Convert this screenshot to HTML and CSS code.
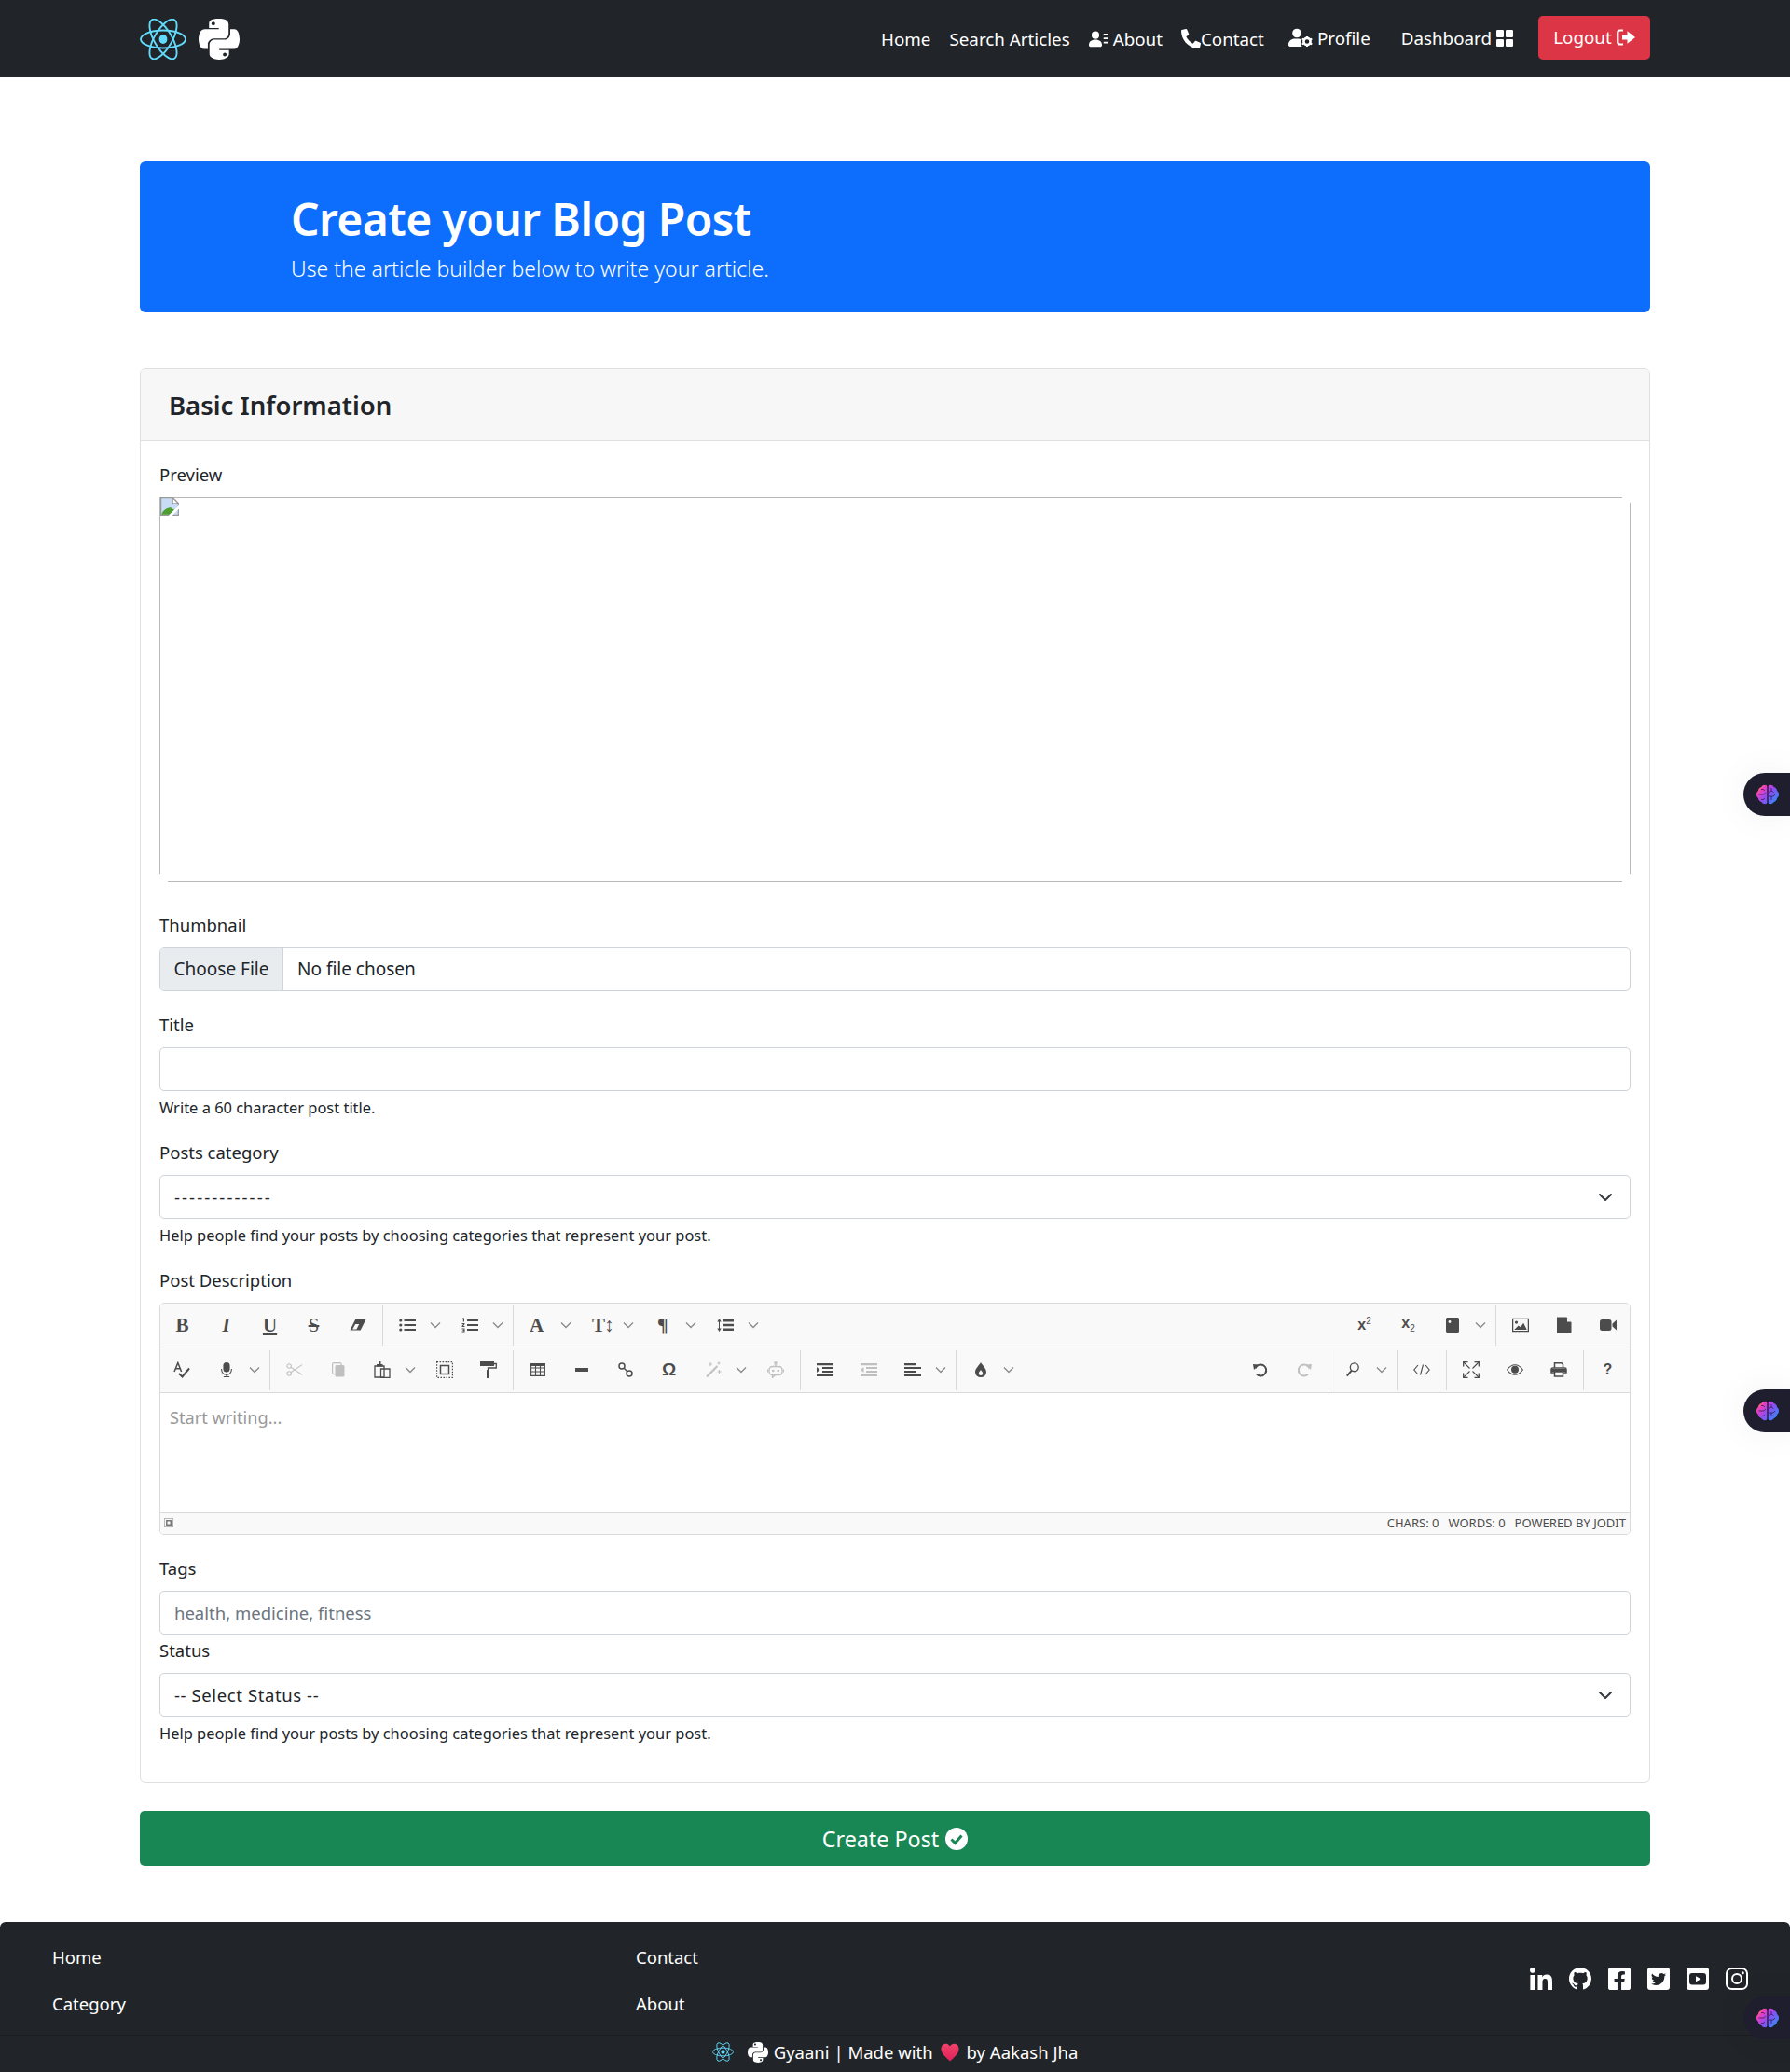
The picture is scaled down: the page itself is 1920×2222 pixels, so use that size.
FILE: index.html

```html
<!DOCTYPE html>
<html lang="en">

<head>
    <meta charset="UTF-8">
    <meta name="viewport" content="width=device-width, initial-scale=1.0">
    <title>Create Post - Gyaani</title>
    <link rel="stylesheet" href="styles.css">
</head>

<body>
    <svg class="sprite" xmlns="http://www.w3.org/2000/svg">
        <defs>
            <linearGradient id="brainGrad" gradientUnits="userSpaceOnUse" x1="2" y1="2" x2="22" y2="20">
                <stop offset="0" stop-color="#ff9a2e" />
                <stop offset="0.22" stop-color="#ee3cc0" />
                <stop offset="0.55" stop-color="#8f4df5" />
                <stop offset="1" stop-color="#2f8cf5" />
            </linearGradient>
            <linearGradient id="heartGrad" x1="0" y1="0" x2="0" y2="1">
                <stop offset="0" stop-color="#f0436a" />
                <stop offset="1" stop-color="#e0205a" />
            </linearGradient>
        </defs>
        <symbol id="react" viewBox="0 0 50 44">
            <g fill="none" stroke="#61dafb" stroke-width="1.9">
                <ellipse cx="25" cy="22" rx="24" ry="9.5" />
                <ellipse cx="25" cy="22" rx="24" ry="9.5" transform="rotate(60 25 22)" />
                <ellipse cx="25" cy="22" rx="24" ry="9.5" transform="rotate(120 25 22)" />
            </g>
            <ellipse cx="25" cy="22" rx="4.4" ry="5" fill="#61dafb" />
        </symbol>
        <symbol id="python" viewBox="0 32 448 448">
            <path fill="#fff" d="M439.8 200.5c-7.7-30.9-22.3-54.2-53.4-54.2h-40.1v47.4c0 36.8-31.2 67.8-66.8 67.8H172.7c-29.2 0-53.4 25-53.4 54.3v101.8c0 29 25.2 46 53.4 54.3 33.8 9.9 66.3 11.7 106.8 0 26.9-7.8 53.4-23.5 53.4-54.3v-40.7H226.2v-13.6h160.2c31.1 0 42.6-21.7 53.4-54.2 11.2-33.5 10.7-65.7 0-108.6zM286.2 404c11.1 0 20.1 9.1 20.1 20.3 0 11.3-9 20.5-20.1 20.5-11 0-20.1-9.3-20.1-20.5.1-11.3 9.1-20.3 20.1-20.3zM167.8 248.1h106.8c29.7 0 53.4-24.5 53.4-54.3V91.9c0-29-24.4-50.7-53.4-55.6-35.8-5.9-74.7-5.6-106.8.1-45.2 8-53.4 24.7-53.4 55.6v40.7h106.9v13.6h-147c-31.1 0-58.3 18.7-66.8 54.2-9.8 40.7-10.2 66.1 0 108.6 7.6 31.6 25.7 54.2 56.8 54.2H101v-48.8c0-35.3 30.5-66.4 66.8-66.4zm-6.7-142.6c-11.1 0-20.1-9.1-20.1-20.3.1-11.3 9-20.5 20.1-20.5 11 0 20.1 9.3 20.1 20.5s-9 20.3-20.1 20.3z" />
        </symbol>
        <symbol id="user-list" viewBox="0 0 24 20">
            <circle cx="8" cy="5" r="4.6" fill="#fff" />
            <path fill="#fff" d="M0 17c0-4 3-6.500 8-6.500s8 2.500 8 6.500c0 1.500-1 2.500-2.500 2.500h-11C1 19.500 0 18.500 0 17z" />
            <path fill="#fff" d="M18 3h6v2h-6zM18 8h6v2h-6zM18 13h6v2h-6z" />
        </symbol>
        <symbol id="phone" viewBox="0 0 512 512">
            <path fill="#fff" transform="matrix(-1 0 0 1 512 0)" d="M493.4 24.600l-104-24c-11.300-2.600-22.900 3.300-27.500 13.900l-48 112c-4.200 9.800-1.400 21.300 6.900 28l60.600 49.600c-36 76.700-98.900 140.500-177.200 177.200l-49.600-60.600c-6.800-8.300-18.200-11.100-28-6.900l-112 48C3.900 366.500-2 378.100.6 389.400l24 104C27.100 504.200 36.700 512 48 512c256.100 0 464-207.500 464-464 0-11.200-7.700-20.900-18.600-23.400z" />
        </symbol>
        <symbol id="user-cog" viewBox="0 0 26 20">
            <circle cx="9" cy="5" r="4.8" fill="#fff" />
            <path fill="#fff" d="M0 17.500c0-4 3-6.500 7-6.500h4c1 0 1.800.2 2.500.5-.5 2.500-.3 5.500 1 8H2c-1.200 0-2-.8-2-2z" />
            <circle cx="20" cy="14" r="3.600" fill="none" stroke="#fff" stroke-width="2.600" />
            <path stroke="#fff" stroke-width="2" d="M20 8.500v2.200M20 17.300v2.200M14.700 11l2 1.200M23.300 15.800l2 1.200M14.700 17l2-1.200M23.300 12.200l2-1.200" />
        </symbol>
        <symbol id="grid" viewBox="0 0 18 18">
            <rect width="8" height="8" rx="1.200" fill="#fff" />
            <rect x="10" width="8" height="8" rx="1.200" fill="#fff" />
            <rect y="10" width="8" height="8" rx="1.200" fill="#fff" />
            <rect x="10" y="10" width="8" height="8" rx="1.200" fill="#fff" />
        </symbol>
        <symbol id="signout" viewBox="0 0 20 18">
            <path fill="none" stroke="#fff" stroke-width="2.200" d="M7 1.500H3.500A2.200 2.200 0 0 0 1.300 3.700v10.600a2.200 2.200 0 0 0 2.200 2.200H7" />
            <path fill="#fff" d="M11.500 2.300 20 9l-8.500 6.700V11.500H6v-5h5.500z" />
        </symbol>
        <symbol id="check-circle" viewBox="0 0 24 24">
            <circle cx="12" cy="12" r="12" fill="#fff" />
            <path fill="none" stroke="#198754" stroke-width="3" d="M6.500 12.500 10.500 16.500 17.500 8.500" />
        </symbol>
        <symbol id="heart" viewBox="0 0 20 20">
            <path fill="url(#heartGrad)" d="M10 19.500C5 15 .5 11 .5 6.300.5 3 2.800.8 5.500.8 7.400.8 9 1.800 10 3.600 11 1.800 12.600.8 14.500.8c2.700 0 5 2.200 5 5.500C19.500 11 15 15 10 19.500z" />
        </symbol>
        <symbol id="linkedin" viewBox="0 0 448 448">
            <path fill="#fff" d="M100.280 448H7.400V148.900h92.880zM53.790 108.100C24.090 108.100 0 83.500 0 53.800a53.790 53.790 0 0 1 107.580 0c0 29.700-24.100 54.300-53.790 54.300zM447.900 448h-92.680V302.400c0-34.700-.7-79.200-48.290-79.200-48.290 0-55.690 37.700-55.690 76.700V448h-92.780V148.900h89.080v40.800h1.300c12.400-23.500 42.690-48.300 87.880-48.300 94 0 111.280 61.900 111.280 142.300V448z" />
        </symbol>
        <symbol id="github" viewBox="0 0 16 16">
            <path fill="#fff" d="M8 0C3.580 0 0 3.580 0 8c0 3.540 2.290 6.530 5.470 7.590.4.070.55-.17.55-.38 0-.19-.01-.82-.01-1.490-2.010.37-2.530-.49-2.690-.94-.09-.23-.48-.94-.82-1.130-.28-.15-.68-.52-.01-.53.63-.01 1.080.58 1.230.82.720 1.210 1.870.87 2.330.66.070-.52.280-.87.510-1.070-1.780-.2-3.640-.89-3.640-3.950 0-.87.310-1.590.820-2.150-.08-.2-.36-1.020.080-2.120 0 0 .67-.21 2.200.82.640-.18 1.320-.27 2-.27.680 0 1.360.09 2 .27 1.530-1.040 2.200-.82 2.200-.82.440 1.100.160 1.920.080 2.120.510.56.820 1.270.820 2.150 0 3.070-1.870 3.750-3.650 3.950.29.250.54.730.54 1.480 0 1.070-.01 1.930-.01 2.200 0 .21.150.46.550.38A8.012 8.012 0 0 0 16 8c0-4.420-3.580-8-8-8z" />
        </symbol>
        <symbol id="facebook" viewBox="0 32 448 448">
            <path fill="#fff" d="M400 32H48A48 48 0 0 0 0 80v352a48 48 0 0 0 48 48h137.250V327.690h-63V256h63v-54.640c0-62.150 37-96.480 93.670-96.480 27.140 0 55.520 4.840 55.520 4.840v61h-31.270c-30.810 0-40.420 19.120-40.420 38.730V256h68.780l-11 71.690h-57.780V480H400a48 48 0 0 0 48-48V80a48 48 0 0 0-48-48z" />
        </symbol>
        <symbol id="twitter" viewBox="0 0 24 24">
            <rect width="24" height="24" rx="3" fill="#fff" />
            <path fill="#212529" transform="translate(4 4)" d="M5.026 15c6.038 0 9.341-5.003 9.341-9.334 0-.14 0-.282-.006-.422A6.685 6.685 0 0 0 16 3.542a6.658 6.658 0 0 1-1.889.518 3.301 3.301 0 0 0 1.447-1.817 6.533 6.533 0 0 1-2.087.793A3.286 3.286 0 0 0 7.875 6.030a9.325 9.325 0 0 1-6.767-3.429 3.289 3.289 0 0 0 1.018 4.382A3.323 3.323 0 0 1 .64 6.575v.045a3.288 3.288 0 0 0 2.632 3.218 3.203 3.203 0 0 1-.865.115 3.230 3.230 0 0 1-.614-.057 3.283 3.283 0 0 0 3.067 2.277A6.588 6.588 0 0 1 .78 13.580a6.320 6.320 0 0 1-.78-.045A9.344 9.344 0 0 0 5.026 15z" />
        </symbol>
        <symbol id="youtube" viewBox="0 0 24 24">
            <rect width="24" height="24" rx="3" fill="#fff" />
            <rect x="3" y="6" width="18" height="12.500" rx="3" fill="#212529" />
            <path fill="#fff" d="M10 9.300 15.500 12.200 10 15.200z" />
        </symbol>
        <symbol id="instagram" viewBox="0 0 24 24">
            <rect x="1" y="1" width="22" height="22" rx="5.500" fill="none" stroke="#fff" stroke-width="2" />
            <circle cx="12" cy="12" r="5" fill="none" stroke="#fff" stroke-width="2" />
            <circle cx="18.300" cy="5.700" r="1.500" fill="#fff" />
        </symbol>
        <symbol id="brain" viewBox="0 0 24 24">
            <path fill="url(#brainGrad)" d="M11.300 3.500v17c0 1-1 1.700-2.300 1.700-1.700 0-3-.8-3.600-2.200C3.500 19.500 2 18 2 16c-1.300-1-2-2.400-2-4s.7-3 2-4c0-2 1.500-3.600 3.400-4C6 2.700 7.300 1.800 9 1.800c1.300 0 2.300.7 2.300 1.700z" />
            <path fill="url(#brainGrad)" d="M12.700 3.500v17c0 1 1 1.700 2.300 1.700 1.700 0 3-.8 3.600-2.200 1.900-.5 3.400-2 3.400-4 1.300-1 2-2.400 2-4s-.7-3-2-4c0-2-1.500-3.600-3.400-4C18 2.700 16.700 1.800 15 1.800c-1.300 0-2.300.7-2.300 1.700z" />
            <path fill="none" stroke="#1e1e2e" stroke-width=".7" d="M2.500 12h5M7.500 12c1 0 2-1 2-2M5 6.500h2c1 0 1.500 1 1.500 1.500M5 17.500h2c1 0 1.500-1 1.500-1.500M16 5v3l-2 1.500M16 8l2.500 1.500M14 14h4l2-2M16 14v4" />
        </symbol>

        <!-- editor toolbar -->
        <symbol id="i-chev" viewBox="0 0 14 14">
            <path fill="none" stroke="#8a8a8a" stroke-width="1.300" d="M2 4.500 7 9.500 12 4.500" />
        </symbol>
        <symbol id="i-eraser" viewBox="0 0 20 16">
            <path fill="#4c4c4c" d="M7 1h12.500L13 14H.5z" />
            <path fill="#f9f9f9" d="M3.500 13 6.800 7h4.500l-3 6z" />
        </symbol>
        <symbol id="i-ul" viewBox="0 0 18 14">
            <circle cx="1.800" cy="2" r="1.600" fill="#4c4c4c" />
            <circle cx="1.800" cy="7" r="1.600" fill="#4c4c4c" />
            <circle cx="1.800" cy="12" r="1.600" fill="#4c4c4c" />
            <path fill="#4c4c4c" d="M5.500 1h12.500v2H5.500zM5.500 6h12.500v2H5.500zM5.500 11h12.500v2H5.500z" />
        </symbol>
        <symbol id="i-ol" viewBox="0 0 18 16">
            <path fill="#4c4c4c" d="M1 .5h2v4H1.800V1.500H1zM.5 6h3v1L2 9h1.500v1h-3V9L2 7H.5zM.5 11.500h3v4h-3v-1h2v-.6h-1v-.8h1v-.6h-2z" />
            <path fill="#4c4c4c" d="M6 2h12v2H6zM6 7h12v2H6zM6 12h12v2H6z" />
        </symbol>
        <symbol id="i-lh" viewBox="0 0 18 14">
            <path fill="#4c4c4c" d="M2 3.500H.3L2.500 0l2.200 3.500H3v7h1.700L2.500 14 .3 10.500H2z" />
            <path fill="#4c4c4c" d="M6 1h12v2.500H6zM6 5.800h12v2.500H6zM6 10.500h12V13H6z" />
        </symbol>
        <symbol id="i-book" viewBox="0 0 14 16">
            <path fill="#4c4c4c" d="M1.500 0h11A1.500 1.500 0 0 1 14 1.500v13a1.500 1.500 0 0 1-1.500 1.500h-11A1.500 1.500 0 0 1 0 14.500v-13A1.500 1.500 0 0 1 1.500 0z" />
            <circle cx="4" cy="4.500" r="1.400" fill="#f9f9f9" />
        </symbol>
        <symbol id="i-image" viewBox="0 0 20 16">
            <path fill="none" stroke="#4c4c4c" stroke-width="1.400" d="M.7.7h18.600v14.600H.7z" />
            <circle cx="5" cy="4.800" r="1.800" fill="#4c4c4c" />
            <path fill="#4c4c4c" d="M2.500 13.500 7.500 8.500l2.500 2 3.500-5 4 8z" />
        </symbol>
        <symbol id="i-file" viewBox="0 0 16 18">
            <path fill="#4c4c4c" d="M0 .5h10.500l5 5.500v12H0z" />
            <path fill="#f9f9f9" d="M11 .5 15.500 5.500H11z" />
        </symbol>
        <symbol id="i-video" viewBox="0 0 18 14">
            <rect y="1" width="12.500" height="12" rx="2.500" fill="#4c4c4c" />
            <path fill="#4c4c4c" d="M13.500 5.500 18 1.500v11l-4.500-4z" />
        </symbol>
        <symbol id="i-spell" viewBox="0 0 18 18">
            <path fill="none" stroke="#4c4c4c" stroke-width="1.500" d="M1 11 4.800 1.500 8.600 11M2.400 7.800h4.800" />
            <path fill="none" stroke="#4c4c4c" stroke-width="2" d="M6 13 9.500 16.500 17 7.500" />
        </symbol>
        <symbol id="i-mic" viewBox="0 0 14 18">
            <rect x="3" y="0" width="8" height="12" rx="4" fill="#4c4c4c" />
            <path fill="none" stroke="#4c4c4c" stroke-width="1.200" d="M1 8v1a6 6 0 0 0 12 0V8M7 15v2.500M3.500 17.400h7" />
        </symbol>
        <symbol id="i-cut" viewBox="0 0 20 16">
            <g fill="none" stroke="#c0c0c0" stroke-width="1.200">
                <circle cx="3.500" cy="3.500" r="2.500" />
                <circle cx="3.500" cy="12.500" r="2.500" />
                <path d="M5.500 5 19 14M5.500 11 19 2" />
            </g>
        </symbol>
        <symbol id="i-copy" viewBox="0 0 14 16">
            <rect x=".6" y=".6" width="9.500" height="12" rx="1.500" fill="none" stroke="#c0c0c0" stroke-width="1.200" />
            <rect x="3.500" y="3" width="10" height="12.500" rx="1.500" fill="#c0c0c0" />
        </symbol>
        <symbol id="i-paste" viewBox="0 0 18 18">
            <path fill="none" stroke="#4c4c4c" stroke-width="1.300" d="M1 5h10v12H1zM7.500 8h9.500v9.300H7.500z" />
            <path fill="#4c4c4c" d="M3 3h2V0h2.500v3h2v2.500H3z" />
        </symbol>
        <symbol id="i-select" viewBox="0 0 18 18">
            <path fill="none" stroke="#4c4c4c" stroke-width="1.200" stroke-dasharray="1.500 1.500" d="M.6.6h16.800v16.800H.6z" />
            <path fill="none" stroke="#4c4c4c" stroke-width="1.500" d="M4.500 4.500h9v9h-9z" />
        </symbol>
        <symbol id="i-paint" viewBox="0 0 18 18">
            <path fill="#4c4c4c" d="M0 0h15v5H0zM7 9h3v9H7z" />
            <path fill="none" stroke="#4c4c4c" stroke-width="1.300" d="M15 2.500h2.300v4.500H8.500v3" />
        </symbol>
        <symbol id="i-table" viewBox="0 0 16 14">
            <path fill="none" stroke="#4c4c4c" stroke-width="1.100" d="M.6.6h14.800v12.800H.6zM.6 5h14.800M.6 9h14.800M5.500.6v12.800M10.500.6v12.800" />
            <path fill="#4c4c4c" d="M.6.6h14.800v2.400H.6z" />
        </symbol>
        <symbol id="i-hr" viewBox="0 0 14 4">
            <rect width="14" height="4" fill="#4c4c4c" />
        </symbol>
        <symbol id="i-link" viewBox="0 0 16 16">
            <g fill="none" stroke="#4c4c4c" stroke-width="1.500">
                <circle cx="4" cy="4" r="3" />
                <circle cx="12" cy="12" r="3" />
                <path d="M6 6 10 10" />
            </g>
        </symbol>
        <symbol id="i-wand" viewBox="0 0 18 18">
            <path fill="none" stroke="#c0c0c0" stroke-width="2" d="M2 16.500 13.500 5" />
            <path fill="none" stroke="#c0c0c0" stroke-width="1.100" d="M6 1v4M4 3h4M15.500 9v4M13.500 11h4M15 .5v3M13.500 2h3" />
        </symbol>
        <symbol id="i-bot" viewBox="0 0 18 18">
            <g fill="none" stroke="#c0c0c0" stroke-width="1.300">
                <circle cx="9" cy="1.800" r="1.200" />
                <path d="M9 3v2.500" />
                <rect x="2" y="5.500" width="14" height="9" rx="3.500" />
                <path d="M.5 8.500v3M17.500 8.500v3M5.500 14.500v3l3-3" />
            </g>
            <circle cx="6.300" cy="10" r="1.300" fill="#c0c0c0" />
            <circle cx="11.700" cy="10" r="1.300" fill="#c0c0c0" />
        </symbol>
        <symbol id="i-indent" viewBox="0 0 18 14">
            <path fill="#4c4c4c" d="M0 0h18v2.200H0zM6 3.900h12v2.200H6zM6 7.900h12v2.200H6zM0 11.800h18V14H0zM0 4l3.500 3L0 10z" />
        </symbol>
        <symbol id="i-outdent" viewBox="0 0 18 14">
            <path fill="#c0c0c0" d="M0 0h18v2.200H0zM6 3.900h12v2.200H6zM6 7.900h12v2.200H6zM0 11.800h18V14H0zM3.500 4 0 7l3.500 3z" />
        </symbol>
        <symbol id="i-align" viewBox="0 0 18 14">
            <path fill="#4c4c4c" d="M0 0h13v2.200H0zM0 3.900h18v2.200H0zM0 7.900h13v2.200H0zM0 11.800h18V14H0z" />
        </symbol>
        <symbol id="i-drop" viewBox="0 0 12 16">
            <path fill="#4c4c4c" d="M6 0c1.500 3 6 6.500 6 10.500A6 5.500 0 0 1 0 10.500C0 6.500 4.500 3 6 0z" />
            <path fill="#f9f9f9" d="M6 8c.6 1.200 2.200 2.300 2.200 3.700a2.200 2.200 0 0 1-4.400 0C3.800 10.300 5.400 9.200 6 8z" />
        </symbol>
        <symbol id="i-undo" viewBox="0 0 16 16">
            <path fill="none" stroke="#4c4c4c" stroke-width="2" d="M2.500 6.500A6 6 0 1 1 4 12.800" />
            <path fill="#4c4c4c" d="M0 2l6 .5L1 8z" />
        </symbol>
        <symbol id="i-redo" viewBox="0 0 16 16">
            <path fill="none" stroke="#c0c0c0" stroke-width="2" d="M13.500 6.500A6 6 0 1 0 12 12.800" />
            <path fill="#c0c0c0" d="M16 2l-6 .5L15 8z" />
        </symbol>
        <symbol id="i-search" viewBox="0 0 16 18">
            <circle cx="10" cy="6" r="5" fill="none" stroke="#4c4c4c" stroke-width="1.500" />
            <path fill="none" stroke="#4c4c4c" stroke-width="2.200" d="M6.500 10 1 16.500" />
        </symbol>
        <symbol id="i-source" viewBox="0 0 18 12">
            <path fill="none" stroke="#4c4c4c" stroke-width="1.100" d="M5 1 .8 6 5 11M13 1l4.200 5L13 11M10.500.5 7.500 11.500" />
        </symbol>
        <symbol id="i-full" viewBox="0 0 18 18">
            <path fill="none" stroke="#4c4c4c" stroke-width="1.300" d="M.7 5.500V.7h4.800M12.500.7h4.800v4.800M.7 12.500v4.800h4.800M12.500 17.300h4.800v-4.800" />
            <path fill="none" stroke="#4c4c4c" stroke-width="1.100" d="M1 1l6.500 6.500M17 1l-6.500 6.500M1 17l6.500-6.500M17 17l-6.500-6.500" />
        </symbol>
        <symbol id="i-eye" viewBox="0 0 18 12">
            <path fill="none" stroke="#4c4c4c" stroke-width="1.100" d="M.6 6C3 2.500 6 .7 9 .7s6 1.800 8.400 5.300C15 9.500 12 11.300 9 11.300S3 9.500.6 6z" />
            <circle cx="9" cy="5.800" r="4" fill="#4c4c4c" />
        </symbol>
        <symbol id="i-print" viewBox="0 0 18 16">
            <path fill="none" stroke="#4c4c4c" stroke-width="1.500" d="M4.500 6V.8h7.500l1.500 1.500V6M4 11H1v-3.500A1.500 1.500 0 0 1 2.500 6h13A1.500 1.500 0 0 1 17 7.500V11h-3M4.500 10h9v5h-9z" />
            <path fill="#4c4c4c" d="M1 7h16v3H1z" />
        </symbol>
        <symbol id="i-resize" viewBox="0 0 12 12">
            <path fill="none" stroke="#777" stroke-width="1" stroke-dasharray="1 1" d="M.5.5h9v9h-9z" />
            <path fill="none" stroke="#777" stroke-width="1.500" d="M2.800 2.800h4.500v4.500H2.800z" />
        </symbol>
    </svg>

    <nav class="navbar">
        <div class="brand">
            <svg class="brand-react"><use href="#react" /></svg>
            <svg class="brand-python"><use href="#python" /></svg>
        </div>
        <div class="nav-links">
            <a class="nav-link">Home</a>
            <a class="nav-link">Search Articles</a>
            <a class="nav-link"><svg class="ico-user-list"><use href="#user-list" /></svg> About</a>
            <a class="nav-link nav-tight"><svg class="ico-phone"><use href="#phone" /></svg>Contact</a>
            <a class="nav-link nav-up nav-profile"><svg class="ico-user-cog"><use href="#user-cog" /></svg> Profile</a>
            <a class="nav-link nav-up nav-dash">Dashboard <svg class="ico-grid"><use href="#grid" /></svg></a>
            <a class="btn-logout">Logout <svg class="ico-signout"><use href="#signout" /></svg></a>
        </div>
    </nav>

    <main class="page">
        <header class="hero">
            <h1 class="hero-title">Create your Blog Post</h1>
            <p class="hero-lead">Use the article builder below to write your article.</p>
        </header>

        <section class="card">
            <h2 class="card-header">Basic Information</h2>
            <div class="card-body">
                <div class="field field-preview">
                    <label class="label">Preview</label>
                    <div class="preview">
                        <svg class="broken" viewBox="0 0 16 16">
                            <path fill="#c8dcf5" stroke="#9a9a9a" d="M.5.5h10l5 5v10H.5z" />
                            <path fill="#fff" stroke="#9a9a9a" d="M10.500.5v5h5z" />
                            <path fill="#4f9e32" d="M1 15c1-4 5-6 8-6l3 2-4 4z" />
                            <path fill="#fff" d="M16 7 7 16h3l6-6z" />
                        </svg>
                    </div>
                </div>

                <div class="field">
                    <label class="label">Thumbnail</label>
                    <div class="control file-control">
                        <span class="file-btn">Choose File</span>
                        <span class="file-name">No file chosen</span>
                    </div>
                </div>

                <div class="field">
                    <label class="label">Title</label>
                    <div class="control"></div>
                    <p class="help">Write a 60 character post title.</p>
                </div>

                <div class="field">
                    <label class="label">Posts category</label>
                    <div class="control select">
                        <span class="select-dashes">-------------</span>
                        <svg class="select-arrow" viewBox="0 0 16 16"><path fill="none" stroke="#343a40" stroke-width="2" stroke-linecap="round" stroke-linejoin="round" d="M2 5l6 6 6-6" /></svg>
                    </div>
                    <p class="help">Help people find your posts by choosing categories that represent your post.</p>
                </div>

                <div class="field">
                    <label class="label">Post Description</label>
                    <div class="editor">
                        <div class="tb-row">
                            <span class="tb-btn tb-serif tb-b">B</span>
                            <span class="tb-btn tb-serif tb-i">I</span>
                            <span class="tb-btn tb-serif tb-u">U</span>
                            <span class="tb-btn tb-serif tb-s">S</span>
                            <span class="tb-btn"><svg class="w18"><use href="#i-eraser" /></svg></span>
                            <span class="tb-sep"></span>
                            <span class="tb-btn tb-combo"><svg class="w18"><use href="#i-ul" /></svg><svg class="chev"><use href="#i-chev" /></svg></span>
                            <span class="tb-btn tb-combo"><svg class="w18"><use href="#i-ol" /></svg><svg class="chev"><use href="#i-chev" /></svg></span>
                            <span class="tb-sep"></span>
                            <span class="tb-btn tb-combo tb-serif tb-b"><span class="tb-letter">A</span><svg class="chev"><use href="#i-chev" /></svg></span>
                            <span class="tb-btn tb-combo tb-serif tb-tt"><span class="tb-letter">T↕</span><svg class="chev"><use href="#i-chev" /></svg></span>
                            <span class="tb-btn tb-combo tb-serif tb-para"><span class="tb-letter">¶</span><svg class="chev"><use href="#i-chev" /></svg></span>
                            <span class="tb-btn tb-combo"><svg class="w18"><use href="#i-lh" /></svg><svg class="chev"><use href="#i-chev" /></svg></span>
                            <span class="tb-right">
                                <span class="tb-btn tb-sup"><span>x<sup>2</sup></span></span>
                                <span class="tb-btn tb-sup"><span>x<sub>2</sub></span></span>
                                <span class="tb-btn tb-combo"><svg class="w14"><use href="#i-book" /></svg><svg class="chev"><use href="#i-chev" /></svg></span>
                                <span class="tb-sep"></span>
                                <span class="tb-btn"><svg class="w18"><use href="#i-image" /></svg></span>
                                <span class="tb-btn"><svg class="w18"><use href="#i-file" /></svg></span>
                                <span class="tb-btn"><svg class="w18"><use href="#i-video" /></svg></span>
                            </span>
                        </div>
                        <div class="tb-row tb-row-last">
                            <span class="tb-btn"><svg class="w18 nudge"><use href="#i-spell" /></svg></span>
                            <span class="tb-btn tb-combo"><svg class="w14"><use href="#i-mic" /></svg><svg class="chev"><use href="#i-chev" /></svg></span>
                            <span class="tb-sep"></span>
                            <span class="tb-btn"><svg class="w18"><use href="#i-cut" /></svg></span>
                            <span class="tb-btn"><svg class="w14"><use href="#i-copy" /></svg></span>
                            <span class="tb-btn tb-combo"><svg class="w18"><use href="#i-paste" /></svg><svg class="chev"><use href="#i-chev" /></svg></span>
                            <span class="tb-btn"><svg class="w18"><use href="#i-select" /></svg></span>
                            <span class="tb-btn"><svg class="w18"><use href="#i-paint" /></svg></span>
                            <span class="tb-sep"></span>
                            <span class="tb-btn"><svg class="w16"><use href="#i-table" /></svg></span>
                            <span class="tb-btn"><svg class="w14 h4"><use href="#i-hr" /></svg></span>
                            <span class="tb-btn"><svg class="w16"><use href="#i-link" /></svg></span>
                            <span class="tb-btn tb-omega">Ω</span>
                            <span class="tb-btn tb-combo"><svg class="w18"><use href="#i-wand" /></svg><svg class="chev"><use href="#i-chev" /></svg></span>
                            <span class="tb-btn"><svg class="w18"><use href="#i-bot" /></svg></span>
                            <span class="tb-sep"></span>
                            <span class="tb-btn"><svg class="w18"><use href="#i-indent" /></svg></span>
                            <span class="tb-btn"><svg class="w18"><use href="#i-outdent" /></svg></span>
                            <span class="tb-btn tb-combo"><svg class="w18"><use href="#i-align" /></svg><svg class="chev"><use href="#i-chev" /></svg></span>
                            <span class="tb-sep"></span>
                            <span class="tb-btn tb-combo"><svg class="w14"><use href="#i-drop" /></svg><svg class="chev"><use href="#i-chev" /></svg></span>
                            <span class="tb-right">
                                <span class="tb-btn"><svg class="w16"><use href="#i-undo" /></svg></span>
                                <span class="tb-btn"><svg class="w16"><use href="#i-redo" /></svg></span>
                                <span class="tb-sep"></span>
                                <span class="tb-btn tb-combo"><svg class="w16"><use href="#i-search" /></svg><svg class="chev"><use href="#i-chev" /></svg></span>
                                <span class="tb-sep"></span>
                                <span class="tb-btn"><svg class="w18"><use href="#i-source" /></svg></span>
                                <span class="tb-sep"></span>
                                <span class="tb-btn"><svg class="w18"><use href="#i-full" /></svg></span>
                                <span class="tb-btn"><svg class="w18"><use href="#i-eye" /></svg></span>
                                <span class="tb-btn"><svg class="w18"><use href="#i-print" /></svg></span>
                                <span class="tb-sep"></span>
                                <span class="tb-btn tb-help">?</span>
                            </span>
                        </div>
                        <div class="editor-body">Start writing...</div>
                        <div class="editor-status">
                            <svg class="resize"><use href="#i-resize" /></svg>
                            <span class="status-items">
                                <span>Chars: 0</span>
                                <span>Words: 0</span>
                                <span>Powered by Jodit</span>
                            </span>
                        </div>
                    </div>
                </div>

                <div class="field field-tags">
                    <label class="label">Tags</label>
                    <div class="control placeholder">health, medicine, fitness</div>
                </div>

                <div class="field field-last">
                    <label class="label">Status</label>
                    <div class="control select">
                        <span class="select-status">-- Select Status --</span>
                        <svg class="select-arrow" viewBox="0 0 16 16"><path fill="none" stroke="#343a40" stroke-width="2" stroke-linecap="round" stroke-linejoin="round" d="M2 5l6 6 6-6" /></svg>
                    </div>
                    <p class="help">Help people find your posts by choosing categories that represent your post.</p>
                </div>
            </div>
        </section>

        <button class="btn-submit">Create Post <svg class="ico-check"><use href="#check-circle" /></svg></button>
    </main>

    <footer class="footer">
        <div class="footer-top">
            <ul class="footer-col">
                <li>Home</li>
                <li>Category</li>
            </ul>
            <ul class="footer-col footer-col-2">
                <li>Contact</li>
                <li>About</li>
            </ul>
            <div class="socials">
                <svg><use href="#linkedin" /></svg>
                <svg><use href="#github" /></svg>
                <svg><use href="#facebook" /></svg>
                <svg><use href="#twitter" /></svg>
                <svg><use href="#youtube" /></svg>
                <svg><use href="#instagram" /></svg>
            </div>
        </div>
        <div class="footer-bottom">
            <svg class="foot-react"><use href="#react" /></svg>
            <svg class="foot-python"><use href="#python" /></svg>
            <span>Gyaani | Made with</span>
            <svg class="foot-heart"><use href="#heart" /></svg>
            <span>by Aakash Jha</span>
        </div>
    </footer>

    <!-- floating widgets -->
    <div class="brain-pill pill-1"><svg><use href="#brain" /></svg></div>
    <div class="brain-pill pill-2"><svg><use href="#brain" /></svg></div>
    <div class="brain-pill pill-3"><svg><use href="#brain" /></svg></div>
</body>

</html>
```

FILE: styles.css

```css
* {
    margin: 0;
    padding: 0;
    box-sizing: border-box;
}

html,
body {
    background: #fff;
}

body {
    position: relative;
    min-height: 2222px;
    font-family: "Noto Sans", "Open Sans", sans-serif;
    font-size: 18.5px;
    line-height: 30px;
    color: #212529;
    overflow-x: hidden;
}

.sprite {
    position: absolute;
    width: 0;
    height: 0;
}

/* navbar */
.navbar {
    display: flex;
    align-items: center;
    justify-content: space-between;
    height: 83px;
    padding: 0 150px;
    background: #212529;
}

.brand {
    display: flex;
    align-items: center;
    gap: 13px;
}

.brand-react {
    width: 50px;
    height: 44px;
}

.brand-python {
    width: 44px;
    height: 44px;
}

.nav-links {
    display: flex;
    align-items: center;
    color: #fff;
    font-size: 18.8px;
}

.nav-link {
    display: flex;
    align-items: center;
    gap: 5px;
    padding: 0 10px;
    white-space: nowrap;
}

.nav-tight {
    gap: 0;
}

.nav-up {
    position: relative;
    top: -1px;
}

.nav-profile {
    margin-left: 6px;
}

.nav-dash {
    margin: 0 17px 0 13px;
}

.ico-user-list {
    width: 21px;
    height: 18px;
}

.ico-phone {
    width: 21px;
    height: 21px;
}

.ico-user-cog {
    width: 26px;
    height: 21px;
}

.ico-grid {
    width: 18px;
    height: 18px;
}

.btn-logout {
    display: flex;
    align-items: center;
    justify-content: center;
    gap: 5px;
    width: 120px;
    height: 47px;
    margin-bottom: 3px;
    border-radius: 5px;
    background: #dc3545;
}

.ico-signout {
    width: 20px;
    height: 18px;
}

/* page */
.page {
    padding: 90px 150px 60px;
}

.hero {
    height: 162px;
    padding: 31px 162px 0;
    border-radius: 6px;
    background: #0d6efd;
    color: #fff;
}

.hero-title {
    font-size: 48px;
    font-weight: 600;
    line-height: 62px;
    letter-spacing: -0.6px;
}

.hero-lead {
    margin-top: 4px;
    font-size: 23.1px;
    font-weight: 300;
    line-height: 36px;
}

.card {
    margin-top: 60px;
    border: 1px solid #dfdfdf;
    border-radius: 6px;
}

.card-header {
    height: 77px;
    padding: 0 30px;
    border-bottom: 1px solid #dfdfdf;
    border-radius: 5px 5px 0 0;
    background: #f7f7f7;
    font-size: 27.5px;
    font-weight: 600;
    line-height: 77px;
}

.card-body {
    padding: 21px 20px 40px;
}

.field {
    margin-bottom: 21px;
}

.field-preview {
    margin-bottom: 31px;
}

.field-tags {
    margin-bottom: 2px;
}

.field-last {
    margin-bottom: 0;
}

.label {
    display: block;
    margin-bottom: 9px;
}

.preview {
    position: relative;
    height: 413px;
    background:
        linear-gradient(#b8b8b8, #b8b8b8) 0 0 / calc(100% - 9px) 1px no-repeat,
        linear-gradient(#b8b8b8, #b8b8b8) 0 0 / 1px calc(100% - 9px) no-repeat,
        linear-gradient(#b8b8b8, #b8b8b8) 9px 100% / calc(100% - 18px) 1px no-repeat,
        linear-gradient(#b8b8b8, #b8b8b8) 100% 6px / 1px calc(100% - 15px) no-repeat;
}

.broken {
    display: block;
    width: 20px;
    height: 20px;
    margin: 1px 0 0 1px;
}

.control {
    height: 47px;
    padding: 0 15px;
    border: 1px solid #ced4da;
    border-radius: 5px;
    line-height: 45px;
}

.file-control {
    display: flex;
    padding: 0;
    overflow: hidden;
    font-size: 19px;
}

.file-btn {
    width: 132px;
    border-right: 1px solid #ced4da;
    background: #e9ecef;
    text-align: center;
}

.file-name {
    padding-left: 15px;
}

.select {
    display: flex;
    align-items: center;
    justify-content: space-between;
    padding-right: 18px;
}

.select-dashes {
    letter-spacing: 2.1px;
}

.select-status {
    letter-spacing: 0.6px;
}

.select-arrow {
    width: 16px;
    height: 16px;
}

.placeholder {
    color: #6c757d;
}

.help {
    margin-top: 5px;
    font-size: 16.45px;
    line-height: 25px;
}

/* jodit editor */
.editor {
    height: 249px;
    border: 1px solid #dadada;
    border-radius: 5px;
    overflow: hidden;
}

.tb-row {
    display: flex;
    align-items: center;
    height: 47px;
    border-bottom: 1px solid #f0f0f0;
    background: #f9f9f9;
}

.tb-row-last {
    height: 49px;
    border-bottom: 1px solid #dadada;
}

.tb-right {
    display: flex;
    align-items: center;
    margin-left: auto;
}

.tb-btn {
    display: flex;
    flex: none;
    align-items: center;
    width: 47px;
    height: 34px;
    justify-content: center;
    color: #4c4c4c;
}

/* a button with its dropdown arrow */
.tb-combo {
    position: relative;
    justify-content: flex-start;
    width: 67px;
}

.tb-combo .w18,
.tb-combo .w16,
.tb-letter {
    margin-left: 15px;
}

.tb-combo .w14 {
    margin-left: 17px;
}

.tb-para .tb-letter {
    margin-left: 18px;
}

.chev {
    position: absolute;
    left: 47px;
    top: 10px;
    width: 14px;
    height: 14px;
}

.tb-sep {
    flex: none;
    width: 1px;
    height: 43px;
    margin: 0 2px 0 3px;
    background: #dadada;
}

.tb-serif {
    font-family: "Liberation Serif", serif;
    font-size: 21px;
    line-height: 1;
}

.tb-b {
    font-weight: 700;
}

.tb-i {
    font-style: italic;
    font-weight: 700;
}

.tb-u {
    font-weight: 700;
    text-decoration: underline;
}

.tb-s {
    text-decoration: line-through;
    font-weight: 400;
}

.tb-tt {
    font-weight: 700;
    letter-spacing: -1px;
}

.tb-para {
    font-weight: 700;
    font-size: 22px;
}

.tb-sup {
    font-family: "Liberation Sans", sans-serif;
    font-size: 16px;
    font-weight: 700;
    line-height: 1;
}

.tb-sup sup,
.tb-sup sub {
    font-size: 10px;
    font-weight: 400;
    line-height: 1;
}

.tb-omega {
    font-family: "Liberation Sans", sans-serif;
    font-size: 19px;
    font-weight: 700;
}

.tb-help {
    font-family: "Liberation Sans", sans-serif;
    font-size: 16px;
    font-weight: 700;
}

.w18 {
    width: 18px;
    height: 18px;
}

.w16 {
    width: 16px;
    height: 16px;
}

.w14 {
    width: 14px;
    height: 16px;
}

.h4 {
    height: 4px;
}

.nudge {
    margin-right: 1px;
}

.editor-body {
    height: 127px;
    padding: 11px 10px;
    background: #fff;
    color: #999;
    font-size: 18.2px;
}

.editor-status {
    display: flex;
    align-items: center;
    justify-content: space-between;
    height: 24px;
    padding: 0 4px 0 4px;
    border-top: 1px solid #dadada;
    background: #f9f9f9;
}

.resize {
    width: 12px;
    height: 12px;
}

.status-items {
    display: flex;
    gap: 10px;
    color: #4c4c4c;
    font-size: 13px;
    line-height: 1;
    text-transform: uppercase;
}

/* submit */
.btn-submit {
    display: flex;
    align-items: center;
    justify-content: center;
    gap: 7px;
    width: 100%;
    height: 59px;
    margin-top: 30px;
    border: 0;
    border-radius: 5px;
    background: #198754;
    color: #fff;
    font: inherit;
    font-size: 23.3px;
}

.ico-check {
    width: 24px;
    height: 24px;
}

/* footer */
.footer {
    height: 161px;
    border-radius: 6px 6px 0 0;
    background: #212529;
    color: #fff;
}

.footer-top {
    display: flex;
    height: 122px;
    padding: 23px 45px 0 56px;
    border-bottom: 1px solid #1a1d20;
}

.footer-col {
    flex: none;
    width: 626px;
    list-style: none;
}

.footer-col li {
    margin-bottom: 20px;
}

.footer-col-2 {
    flex: 1;
}

.socials {
    display: flex;
    gap: 18px;
    margin-top: 26px;
}

.socials svg {
    width: 24px;
    height: 24px;
}

.footer-bottom {
    display: flex;
    align-items: center;
    justify-content: center;
    height: 39px;
    padding-bottom: 4px;
}

.foot-react {
    width: 23px;
    height: 23px;
    margin-right: 15px;
}

.foot-python {
    width: 22px;
    height: 22px;
    margin-right: 6px;
}

.foot-heart {
    width: 20px;
    height: 20px;
    margin: 0 8px;
}

/* floating brain buttons */
.brain-pill {
    position: absolute;
    right: 0;
    display: flex;
    align-items: center;
    width: 50px;
    height: 46px;
    padding-left: 14px;
    border-radius: 23px 0 0 23px;
    background: #1e1e2e;
    box-shadow: 0 0 40px rgba(0, 0, 0, 0.06);
}

.brain-pill svg {
    width: 24px;
    height: 24px;
}

.pill-1 {
    top: 829px;
}

.pill-2 {
    top: 1490px;
}

.pill-3 {
    top: 2141px;
}
```
